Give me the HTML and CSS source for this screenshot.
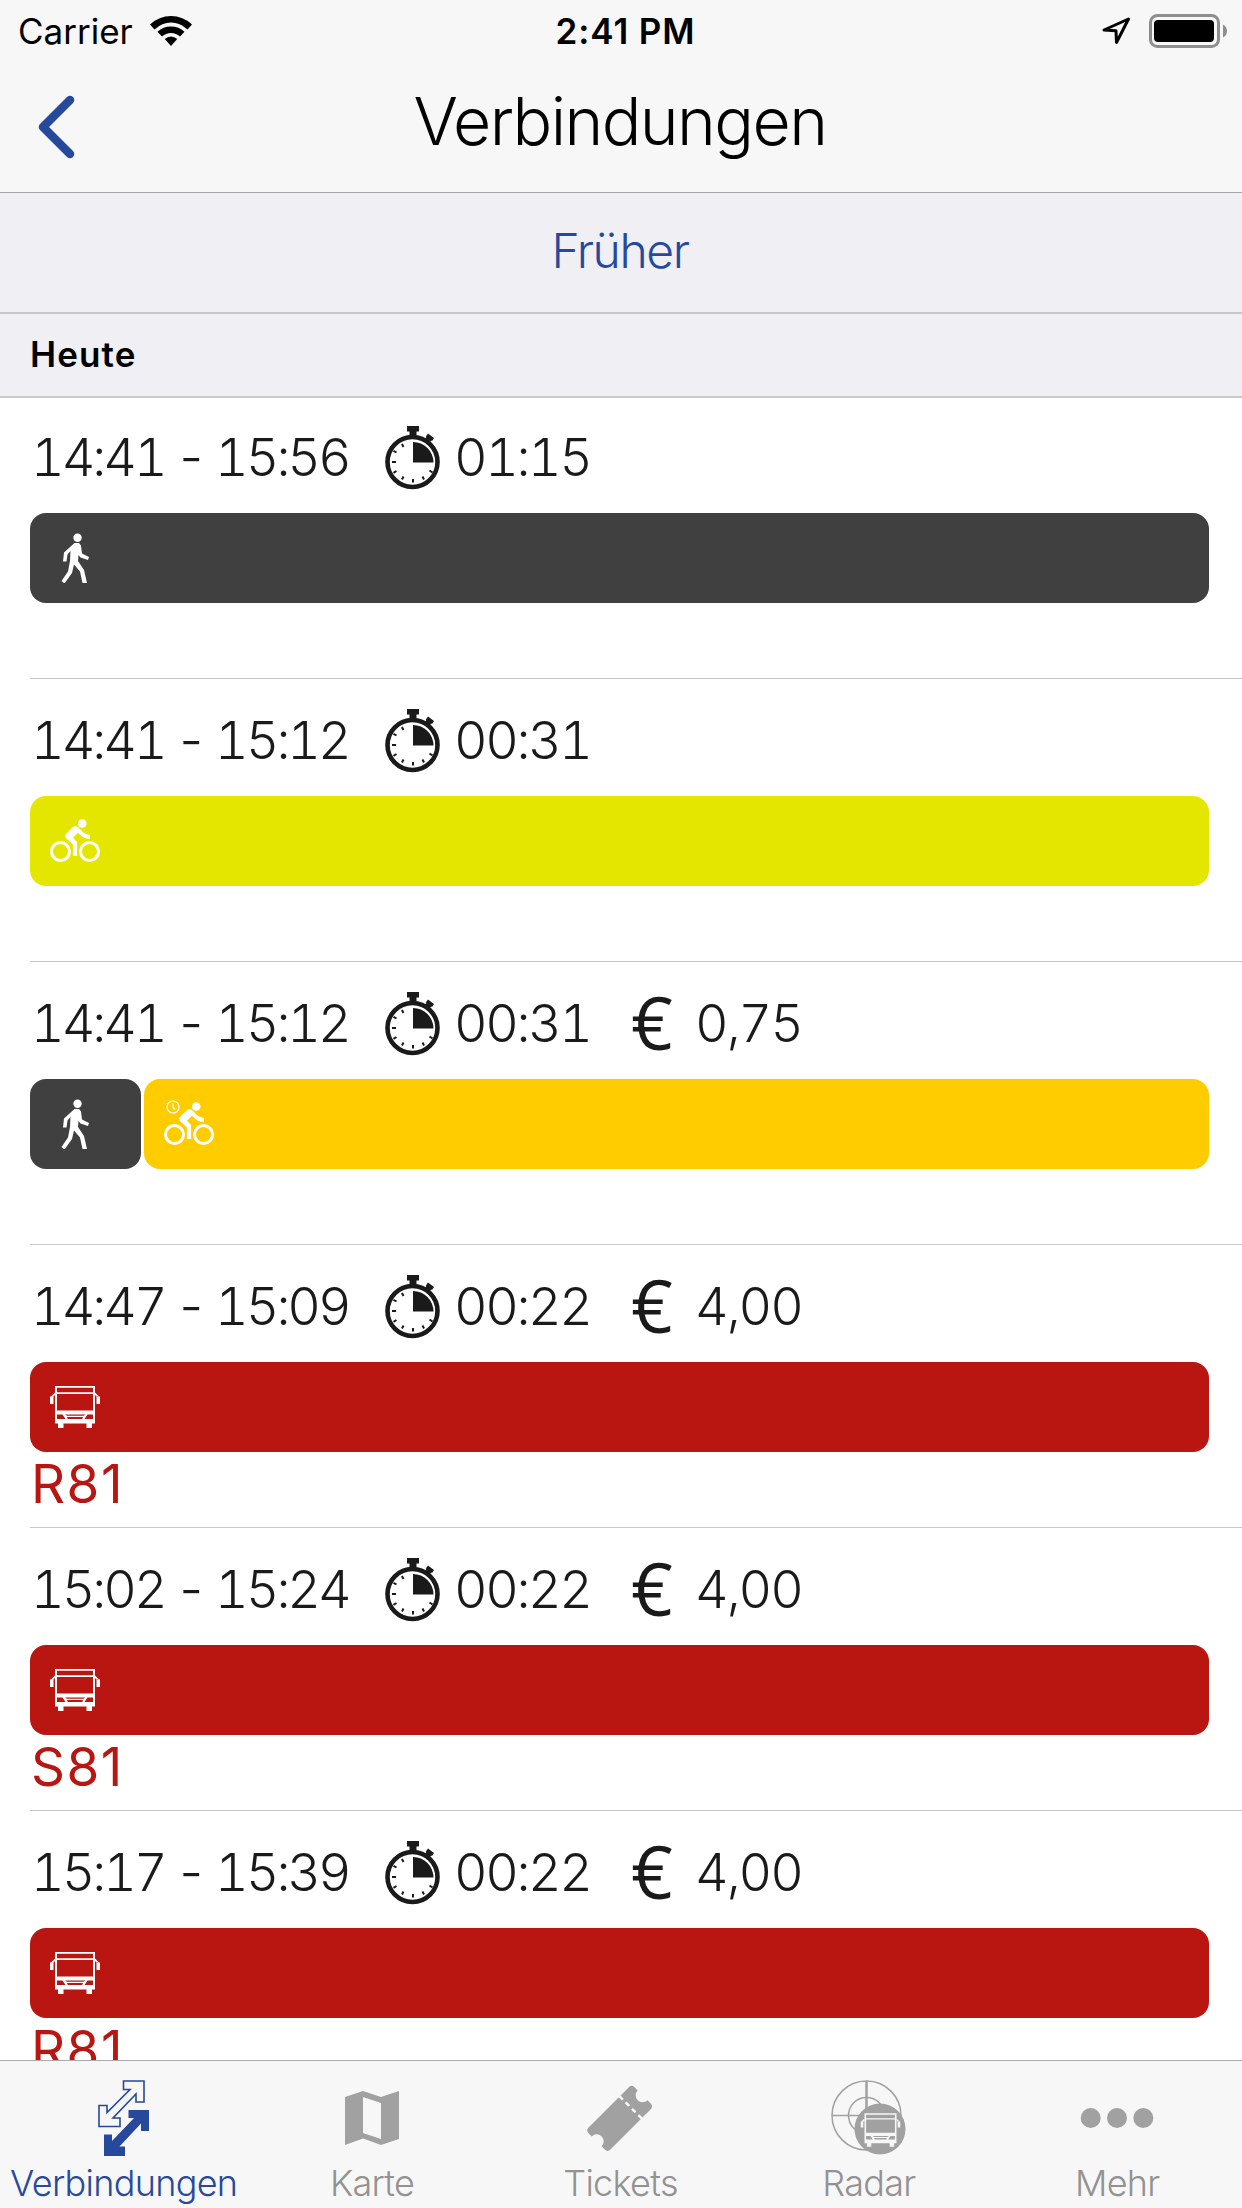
FILE: index.html
```
<!DOCTYPE html>
<html lang="de">
<head>
	<meta charset="UTF-8"/>
	<meta name="viewport" content="width=device-width,initial-scale=1.0"/>
	<title>Verbindungen</title>
	<link rel="stylesheet" href="styles.css">
</head>
<body>

<!-- Shared icons -->
<svg class="defs" width="0" height="0">
	<symbol id="watch" viewBox="0 0 56 64">
		<path d="M22 0h12v5.500h-2.500v6h-7v-6H22z"/>
		<path d="M43 7.500l6 4.500-2 3-.8-.4-3 3.800-5-3.500 3.200-4-.6-.5z"/>
		<circle cx="27.500" cy="36" r="25" fill="none" stroke="currentColor" stroke-width="4.600"/>
		<path d="M28 16a20.500 20.500 0 0 1 20.500 20.500H28z"/>
		<path d="M28 53v3.500M37.500 50.500l1.500 3M44.500 44.500l3 2M18.500 50.500l-1.500 3M11.500 45l-3 1.800M7 36h4M11.500 26.500l-3-1.700M18.500 21l-1.600-3" stroke="currentColor" stroke-width="2"/>
	</symbol>
	<symbol id="walk" viewBox="0 0 50 50">
		<circle cx="27.500" cy="4.800" r="4.200"/>
		<path d="M24.500 10h4.500l2 2.500 1 8 7 3.500-1 3-7.500-2.500-2-2.500-.5 6 6 9 3 13h-4.500l-2.500-11.500-6-7-2 8.500-7.500 10.500-3-2.500 6.500-9.500 2-10.500 .5-10-3 3.500-1 7h-3.500l1-9z"/>
	</symbol>
	<symbol id="bike" viewBox="0 0 50 50">
		<g fill="none" stroke="currentColor" stroke-width="3"><circle cx="10.500" cy="35.500" r="9"/><circle cx="39.500" cy="35.500" r="9"/></g>
		<circle cx="32.200" cy="7.500" r="4.300"/>
		<path d="M22.500 11.500q3-2.500 6 0l4.500 4.800q2.500 2.200 7 2.700v4.200q-6-.5-9.500-4l-2.700-2.500-4.700 5 4 4.300v14h-4.200V28.500l-6-5.500q-3.500-3 0-6z"/>
	</symbol>
	<symbol id="clock" viewBox="0 0 14 14">
		<circle cx="7" cy="7" r="6" fill="none" stroke="currentColor" stroke-width="1.200"/>
		<path d="M7 3.200v4.600l2.200 1.700" fill="none" stroke="currentColor" stroke-width="1.100"/>
	</symbol>
	<symbol id="bus" viewBox="0 0 50 50">
		<path fill-rule="evenodd" d="M5 4h40v37.500h-3V46h-5.500v-4.500h-23V46H8v-4.500H5zM7 5.800v4.400h36V5.800zM7 12v16.500h36V12zM7 32.500V37h8.500l-3-4.500zM15 32.500l2 1.200h16.500l2-1.200zM17 35l.8 2h14.400l.8-2zM37.500 32.500l-3 4.500H43v-4.500z"/>
		<path d="M0 14.500h3.500V22H0zM46.500 14.500H50V22h-3.500zM1 14.500l4-4v2.500l-2 2zM49 14.500l-4-4v2.500l2 2z"/>
	</symbol>
</svg>

<header>
	<div class="statusbar">
		<div class="carrier">
			<span>Carrier</span>
			<svg class="wifi" viewBox="0 0 42 30"><path d="M21 0q12 0 21 8.500l-4.500 5Q30 6.500 21 6.500T4.500 13.500L0 8.500Q9 0 21 0zM21 10.500q8 0 13.500 5.300L30 20.500q-4-3.500-9-3.500t-9 3.500l-4.500-4.700Q13 10.500 21 10.500zM21 20.500q3.500 0 6.200 2.500L21 30l-6.200-7q2.700-2.500 6.200-2.500z"/></svg>
		</div>
		<span class="clock">2:41 PM</span>
		<div class="indicators">
			<svg class="location" viewBox="0 0 29 28"><path d="M26.500 2L2 13l12 .8.500 11.700z"/></svg>
			<svg class="battery" viewBox="0 0 78 34"><rect x="1.500" y="1.500" width="68" height="31" rx="7"/><rect class="level" x="5" y="6" width="60" height="22" rx="4"/><path d="M74 10.500q4 2 4 6.500t-4 6.500z"/></svg>
		</div>
	</div>
	<div class="navbar">
		<svg class="back" viewBox="0 0 38 64"><path d="M33 5L6 32l27 27"/></svg>
		<h1>Verbindungen</h1>
	</div>
</header>

<main>
	<div class="earlier"><a>Früher</a></div>
	<h2>Heute</h2>
	<ul class="trips">
		<li>
			<div class="info"><span class="time">14:41 - 15:56</span><svg class="watch"><use href="#watch"/></svg><span class="duration">01:15</span></div>
			<div class="legs"><div class="leg foot"><svg><use href="#walk"/></svg></div></div>
		</li>
		<li>
			<div class="info"><span class="time">14:41 - 15:12</span><svg class="watch"><use href="#watch"/></svg><span class="duration">00:31</span></div>
			<div class="legs"><div class="leg cycle"><svg><use href="#bike"/></svg></div></div>
		</li>
		<li>
			<div class="info"><span class="time">14:41 - 15:12</span><svg class="watch"><use href="#watch"/></svg><span class="duration">00:31</span><span class="euro">€</span><span class="price">0,75</span></div>
			<div class="legs"><div class="leg foot short"><svg><use href="#walk"/></svg></div><div class="leg rental"><svg><use href="#bike"/><use href="#clock" x="2" y="1" width="14" height="14"/></svg></div></div>
		</li>
		<li>
			<div class="info"><span class="time">14:47 - 15:09</span><svg class="watch"><use href="#watch"/></svg><span class="duration">00:22</span><span class="euro">€</span><span class="price">4,00</span></div>
			<div class="legs"><div class="leg bus"><svg><use href="#bus"/></svg></div></div>
			<div class="line">R81</div>
		</li>
		<li>
			<div class="info"><span class="time">15:02 - 15:24</span><svg class="watch"><use href="#watch"/></svg><span class="duration">00:22</span><span class="euro">€</span><span class="price">4,00</span></div>
			<div class="legs"><div class="leg bus"><svg><use href="#bus"/></svg></div></div>
			<div class="line">S81</div>
		</li>
		<li>
			<div class="info"><span class="time">15:17 - 15:39</span><svg class="watch"><use href="#watch"/></svg><span class="duration">00:22</span><span class="euro">€</span><span class="price">4,00</span></div>
			<div class="legs"><div class="leg bus"><svg><use href="#bus"/></svg></div></div>
			<div class="line">R81</div>
		</li>
	</ul>
</main>

<nav>
	<a class="active">
		<svg viewBox="0 0 76 76">
			<path d="M37.500 1H58v21h-8v-8L27 38h7v8.500H13V25.500h8v7l23-23h-6.500z" fill="none" stroke="currentColor" stroke-width="1.600"/>
			<path d="M42.500 30H63v21h-8v-7.500L33.500 66.500H39V76H18V54.500h8V61L48 38h-5.500z"/>
		</svg>
		<span>Verbindungen</span>
	</a>
	<a>
		<svg viewBox="0 0 76 76"><path fill-rule="evenodd" d="M11 17l18-6 18 6 18-6v48l-18 6-18-6.500L11 65zM29 17v36l18 6V23z"/></svg>
		<span>Karte</span>
	</a>
	<a>
		<svg viewBox="0 0 76 76">
			<g transform="rotate(-45 38 38)">
				<path d="M9 22.500h57q4 0 4 4v4.500a7 7 0 0 0 0 14v4.500q0 4-4 4H9q-4 0-4-4v-4.500a7 7 0 0 0 0-14v-4.500q0-4 4-4z"/>
				<path class="perforation" d="M53 22v33"/>
			</g>
		</svg>
		<span>Tickets</span>
	</a>
	<a>
		<svg viewBox="0 0 76 76">
			<g fill="none" stroke="currentColor" stroke-width="1.500"><circle cx="35.500" cy="35.500" r="34.500"/><circle cx="35.500" cy="35.500" r="18"/><path d="M1 35.500h34" /><path d="M35.500 1v35" stroke-width="2.500"/></g>
			<circle cx="49" cy="49" r="25.500"/>
			<use class="radarbus" href="#bus" x="29.500" y="30" width="40" height="40"/>
		</svg>
		<span>Radar</span>
	</a>
	<a>
		<svg viewBox="0 0 76 76"><circle cx="11.700" cy="38" r="10"/><circle cx="38" cy="38" r="10"/><circle cx="64.300" cy="38" r="10"/></svg>
		<span>Mehr</span>
	</a>
</nav>

</body>
</html>
```
FILE: styles.css
```
* {box-sizing: border-box;}
html, body {
	height: 100%;
	margin: 0;
}
body {
	background: #FFFFFF;
	color: #000000;
	display: flex;
	flex-direction: column;
	font-family: Inter, "Liberation Sans", sans-serif;
	font-weight: 300;
	overflow: hidden;
}
svg {
	display: block;
	fill: currentColor;
	flex: none;
}
.defs {
	position: absolute;
}

/* Status bar and title */
header {
	background: #F7F7F7;
	border-bottom: 1px solid #A7A7AA;
	flex: none;
	height: 193px;
}
.statusbar {
	display: grid;
	grid-template-columns: 1fr auto 1fr;
	align-items: center;
	height: 62px;
	padding: 0 15px 0 18px;
	font-size: 35px;
	line-height: 62px;
}
.carrier {
	display: flex;
	align-items: center;
	font-weight: 400;
	gap: 17px;
}
.wifi {
	height: 30px;
	width: 42px;
}
.clock {
	font-weight: 600;
	letter-spacing: 0.9px;
	padding-left: 6px;
}
.indicators {
	display: flex;
	align-items: center;
	justify-content: flex-end;
	gap: 18px;
}
.location {
	fill: none;
	height: 28px;
	stroke: #000000;
	stroke-linejoin: round;
	stroke-width: 3;
	width: 29px;
}
.battery {
	color: #8E8E8E;
	height: 34px;
	width: 78px;
}
.battery rect {
	fill: none;
	stroke: #8E8E8E;
	stroke-width: 3;
}
.battery .level {
	fill: #000000;
	stroke: none;
}
.navbar {
	display: grid;
	grid-template-columns: 76px 1fr 76px;
	align-items: center;
	height: 130px;
}
.back {
	fill: none;
	height: 64px;
	margin-left: 37px;
	stroke: #27499C;
	stroke-linecap: round;
	stroke-linejoin: round;
	stroke-width: 8.5;
	width: 38px;
}
h1 {
	font-size: 66px;
	font-weight: 300;
	letter-spacing: -1.6px;
	line-height: 80px;
	margin: 0 2px 12px 0;
	text-align: center;
}

/* Connection list */
main {
	flex: 1;
	min-height: 0;
	overflow: hidden;
}
.earlier {
	background: #EFEFF4;
	border-bottom: 2px solid #C8C7CC;
	color: #27499C;
	font-size: 48px;
	height: 121px;
	letter-spacing: -1.4px;
	line-height: 116px;
	padding-right: 2px;
	text-align: center;
}
h2 {
	background: #EFEFF4;
	border-bottom: 2px solid #C8C7CC;
	font-size: 35px;
	font-weight: 600;
	height: 84px;
	letter-spacing: 1.1px;
	line-height: 80px;
	margin: 0 0 -2px;
	padding-left: 30px;
}
.trips {
	list-style: none;
	margin: 0;
	padding: 0 0 0 30px;
}
.trips li {
	border-bottom: 1px solid #C8C7CC;
	height: 283px;
	padding-top: 30px;
}
.info {
	color: #1A1A1A;
	display: grid;
	grid-template-columns: 355px 70px 176px 64px auto;
	align-items: center;
	font-size: 52px;
	font-variant-numeric: tabular-nums;
	height: 64px;
	letter-spacing: -2px;
	line-height: 64px;
	margin-bottom: 23px;
	white-space: nowrap;
}
.time {
	letter-spacing: -3px;
	padding-left: 1px;
	word-spacing: -1px;
}
.duration {
	letter-spacing: -2.4px;
	margin-left: -1px;
}
.watch {
	height: 64px;
	width: 56px;
}
.euro {
	font-family: "Open Sans", sans-serif;
	font-size: 73px;
	font-weight: 500;
	line-height: 60px;
	margin-top: -4px;
}
.legs {
	display: flex;
	gap: 3px;
	margin-right: 33px;
}
.leg {
	border-radius: 16px;
	color: #FFFFFF;
	flex: 1;
	height: 90px;
	padding: 20px;
}
.leg svg {
	height: 50px;
	width: 50px;
}
.foot {
	background: #404040;
}
.short {
	flex: 0 0 111px;
}
.cycle {
	background: #E5E600;
}
.rental {
	background: #FFCC00;
}
.bus {
	background: #BA1611;
}
.line {
	color: #BA1611;
	font-size: 53px;
	font-weight: 400;
	letter-spacing: 1.5px;
	line-height: 64px;
	padding-left: 1px;
}

/* Tab bar */
nav {
	background: #F7F7F7;
	border-top: 1px solid #ABABAB;
	display: grid;
	flex: none;
	grid-template-columns: repeat(5, 1fr);
	height: 148px;
}
nav a {
	align-items: center;
	color: #929292;
	display: flex;
	flex-direction: column;
	font-size: 36px;
	letter-spacing: -0.7px;
	line-height: 44px;
	padding: 19px 1px 0 0;
}
nav svg {
	color: #A1A1A1;
	height: 76px;
	margin-bottom: 5px;
	width: 76px;
}
.active, .active svg {
	color: #27499C;
}
.perforation {
	fill: none;
	stroke: #F7F7F7;
	stroke-dasharray: 5 4;
	stroke-width: 2.5;
}
.radarbus {
	color: #F7F7F7;
}
```
